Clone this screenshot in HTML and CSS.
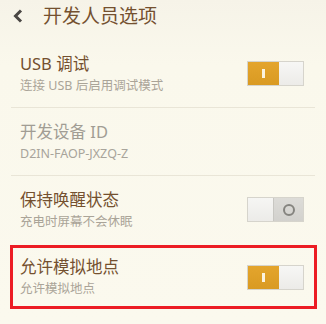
FILE: index.html
```html
<!DOCTYPE html>
<html lang="zh">
<head>
<meta charset="utf-8">
<link rel="stylesheet" href="styles.css">
</head>
<body>
<div class="screen">
  <header class="header">
    <svg class="back" width="12" height="14" viewBox="0 0 12 14"><polyline points="9,1.5 3.5,7 9,12.5" fill="none" stroke="#4a4744" stroke-width="3"/></svg>
    <h1 class="title">开发人员选项</h1>
  </header>
  <div class="list">
    <div class="row">
      <div class="text">
        <div class="label">USB 调试</div>
        <div class="sub">连接 USB 后启用调试模式</div>
      </div>
      <div class="toggle on"><span class="half lit"><i class="bar"></i></span><span class="half blank"></span></div>
    </div>
    <div class="row">
      <div class="text">
        <div class="label dim">开发设备 ID</div>
        <div class="sub dim">D2IN-FAOP-JXZQ-Z</div>
      </div>
    </div>
    <div class="row last">
      <div class="text">
        <div class="label">保持唤醒状态</div>
        <div class="sub">充电时屏幕不会休眠</div>
      </div>
      <div class="toggle off"><span class="half blank"></span><span class="half grey"><i class="ring"></i></span></div>
    </div>
    <div class="row marked">
      <div class="text">
        <div class="label">允许模拟地点</div>
        <div class="sub">允许模拟地点</div>
      </div>
      <div class="toggle on"><span class="half lit"><i class="bar"></i></span><span class="half blank"></span></div>
    </div>
  </div>
</div>
</body>
</html>
```

FILE: styles.css
```css
html, body {
  margin: 0;
  padding: 0;
}
body {
  background: #fbf9ee;
  font-family: "Noto Sans", "Noto Sans CJK SC", sans-serif;
  width: 326px;
  height: 324px;
  overflow: hidden;
}
.screen {
  width: 326px;
  height: 324px;
  background: linear-gradient(180deg, #f6f3e8 0%, #faf8ec 20%, #fbf9ee 100%);
}
.header {
  height: 40px;
  display: flex;
  align-items: center;
  padding-left: 12px;
  box-sizing: border-box;
  padding-bottom: 9px;
}
.back {
  display: block;
}
.title {
  margin: 0 0 0 19px;
  font-size: 19px;
  font-weight: normal;
  line-height: 24px;
  color: #74502f;
}
.list {
  display: flex;
  flex-direction: column;
}
.row {
  height: 67px;
  margin: 0 11px;
  border-bottom: 1px solid #e9e5d7;
  display: flex;
  align-items: center;
  justify-content: space-between;
  padding: 0 11px 0 9px;
}
.row.last {
  border-bottom: none;
}
.row.marked {
  height: 58px;
  margin: 2px 9px 0 10px;
  border: 3px solid #ec1c24;
  padding: 0 10px 0 7px;
}
.text {
  display: flex;
  flex-direction: column;
  gap: 4px;
}
.label {
  font-size: 16.5px;
  line-height: 20px;
  color: #74502f;
}
.sub {
  font-size: 12.5px;
  line-height: 16px;
  color: #aaa498;
}
.label.dim {
  color: #a19d94;
}
.sub.dim {
  color: #a8a49b;
}
.toggle {
  width: 57px;
  height: 25px;
  box-sizing: border-box;
  border: 1px solid #d6d4cc;
  display: flex;
}
.half {
  display: flex;
  align-items: center;
  justify-content: center;
}
.toggle.on .lit {
  width: 31px;
  background: linear-gradient(180deg, #e4a52d 0%, #d99a22 100%);
}
.toggle.on .blank {
  flex: 1;
  background: linear-gradient(180deg, #f7f7f5 0%, #ecebe8 100%);
}
.toggle.off .blank {
  width: 25px;
  background: linear-gradient(180deg, #f6f6f4 0%, #ecebe8 100%);
  border-right: 1px solid #c8c7c2;
}
.toggle.off .grey {
  flex: 1;
  background: linear-gradient(180deg, #dddcd8 0%, #d2d1cd 100%);
}
.bar {
  width: 3px;
  height: 9px;
  background: #fbf3df;
}
.ring {
  width: 8px;
  height: 8px;
  border: 2px solid #85847f;
  border-radius: 50%;
}
```
